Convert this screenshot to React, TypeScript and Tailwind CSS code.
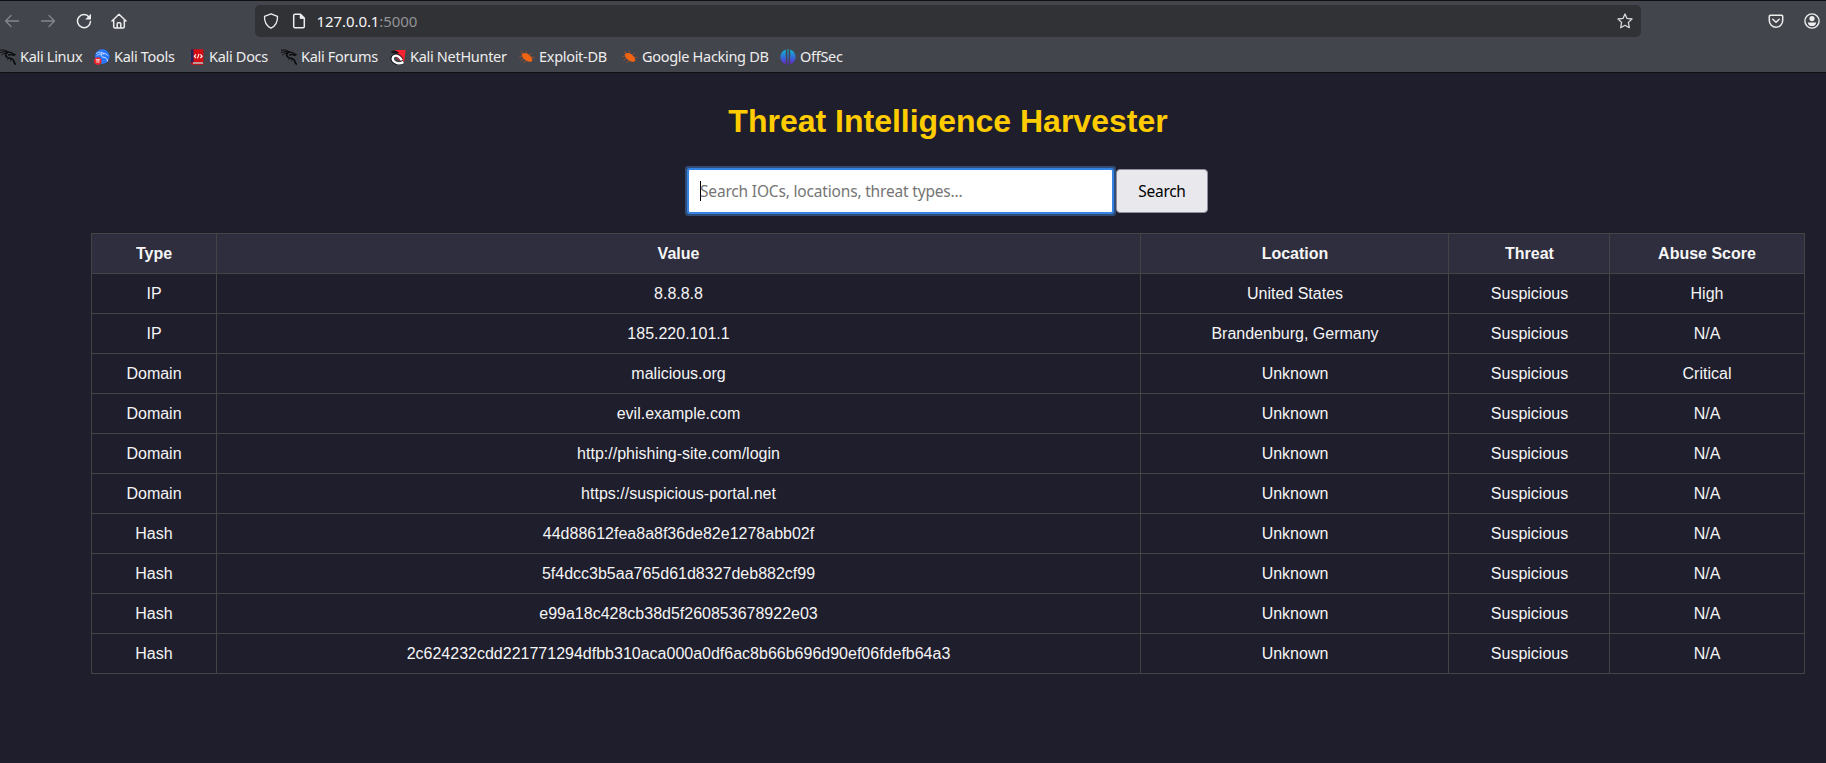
import type { ReactNode } from 'react';

const ui = 'font-["Noto_Sans",sans-serif]';

const rows = [
  ['IP', '8.8.8.8', 'United States', 'Suspicious', 'High'],
  ['IP', '185.220.101.1', 'Brandenburg, Germany', 'Suspicious', 'N/A'],
  ['Domain', 'malicious.org', 'Unknown', 'Suspicious', 'Critical'],
  ['Domain', 'evil.example.com', 'Unknown', 'Suspicious', 'N/A'],
  ['Domain', 'http://phishing-site.com/login', 'Unknown', 'Suspicious', 'N/A'],
  ['Domain', 'https://suspicious-portal.net', 'Unknown', 'Suspicious', 'N/A'],
  ['Hash', '44d88612fea8a8f36de82e1278abb02f', 'Unknown', 'Suspicious', 'N/A'],
  ['Hash', '5f4dcc3b5aa765d61d8327deb882cf99', 'Unknown', 'Suspicious', 'N/A'],
  ['Hash', 'e99a18c428cb38d5f260853678922e03', 'Unknown', 'Suspicious', 'N/A'],
  ['Hash', '2c624232cdd221771294dfbb310aca000a0df6ac8b66b696d90ef06fdefb64a3', 'Unknown', 'Suspicious', 'N/A'],
];

const cellPadding = ['p-0', 'p-0', 'py-0 pr-0 pl-px', 'py-0 pr-0 pl-px', 'p-0'];

const line = { fill: 'none', stroke: 'currentColor', strokeWidth: 1.3, strokeLinecap: 'round', strokeLinejoin: 'round' } as const;

function Icon({ children, className = '' }: { children: ReactNode; className?: string }) {
  return (
    <svg viewBox="0 0 16 16" className={`size-4 shrink-0 ${className}`}>
      {children}
    </svg>
  );
}

function Dragon() {
  return (
    <Icon>
      <g fill="none" stroke="#0b0c0e" strokeLinecap="round" strokeLinejoin="round">
        <path d="M0 1.2C3.2.5 6.3 1 8.6 3.1M.2 3.7C2.6 2.5 5 2.2 8 3.3M1.6 6C3.3 4.4 5 3.7 7.2 4" strokeWidth="1" />
        <path d="M6.8 3.4C5 5.6 5.4 8.4 8.6 9c3.3.5 4.9 1.4 5.3 3.6.2 1 .6 1.8 1.5 2.4" strokeWidth="1.7" />
        <path d="M8.2 3.2c2-.4 3.4.2 4.8 1.6l2.2.8-1.8.8-2.6-.9-2.3.5" strokeWidth="1.3" />
        <path d="M8.8 9.2 7.2 11M11.3 9.8l-.9 2.2" strokeWidth=".8" />
      </g>
    </Icon>
  );
}

function Tools() {
  return (
    <Icon>
      <circle cx="8.3" cy="7.6" r="7.3" fill="#2777ff" />
      <g fill="none" stroke="#d5e5ff" strokeLinecap="round">
        <path d="M2.3 4.3C5.2 2.6 8.3 2.9 10 4.5M3 6.5c2-1.5 4-2 6.3-1.5" strokeWidth=".8" />
        <path d="M7.2 4.8c-.7 2.5 1 3.4 3 3.6 2 .3 3 1.4 3.3 3.6M9.6 4.4c1.6-.2 3 .7 4 2" strokeWidth="1" />
      </g>
      <circle cx="3.8" cy="12.1" r="3.8" fill="#e8262d" />
      <path d="M1.7 10.7h4.2M3 10.7v3.2M4.8 10.7v3.2" fill="none" stroke="#fff" strokeWidth=".8" />
    </Icon>
  );
}

function Docs() {
  return (
    <svg viewBox="0 0 13 16" className="h-4 w-[13px] shrink-0">
      <path d="M0 1.2Q0 .3 1 .3h11.4v13H2v1.2h10.4v1.2H1.2Q0 15.5 0 14.3z" fill="#d50d12" />
      <path d="M0 1.2Q0 .3 1 .3h1.5v13H1.2L0 14z" fill="#26235e" />
      <path d="M2 13.4h10v1.2H2z" fill="#e9dcdc" />
      <path d="M5 5.3 3.3 7.2 5 9M9.4 5.3l1.7 1.9L9.4 9M6.5 9.3l1.5-4.5" fill="none" stroke="#fff" strokeWidth="1.1" />
    </svg>
  );
}

function NetHunter() {
  return (
    <Icon>
      <path d="M4.5 1H15.6L14.3 12.5 8 8.3z" fill="#f5222f" />
      <path d="M.4 3.2C3 .5 7 1.2 9 4L5.5 5z" fill="#151618" />
      <path d="M13.8 13.5C10 15.8 5 15.4 2.5 12 .5 9 2.6 5.500 6.300 5.700c3 .2 4.500 2.200 6 4.800" fill="none" stroke="#151618" strokeWidth="2.4" />
      <path d="M13.5 13.2C9.8 15 5.4 14.6 3.3 11.6 1.8 9 3.3 6.4 6.3 6.6c2.8.2 4 2.200 5.600 4.600" fill="none" stroke="#fff" strokeWidth="2.4" />
      <path d="M6.5 9.3c1.5 0 2.200 1 3.300 2.200" fill="none" stroke="#f5222f" strokeWidth="1" />
    </Icon>
  );
}

function Bug() {
  return (
    <Icon>
      <path d="M2.600 5C5 3.400 7.400 3.600 9.400 5.200l3.300 3.400.7 2.800-2 1.700-3-.8C5.200 10.800 3 8.700 2.600 5z" fill="#f06414" />
      <path d="M4 3.800 1.600 2.200M3 7 .3 7.700M4.600 9.400 1.500 11.700M7.300 12l-2.800 1.700M7.500 3.500 7 2M10.500 5.500l2.200-1.200M12.300 8l3.300.7" fill="none" stroke="#b65522" strokeWidth=".7" />
    </Icon>
  );
}

function OffSec() {
  return (
    <Icon>
      <defs>
        <linearGradient id="osg" x1="0" y1="0" x2="0" y2="1">
          <stop offset="0" stopColor="#12b5cf" />
          <stop offset=".5" stopColor="#3070d8" />
          <stop offset="1" stopColor="#6a20cf" />
        </linearGradient>
      </defs>
      <path d="M5.800 .6v14.400C-1.300 13.300-1.500 3 5.800 .6zM10.200 .6v14.400C17.300 13.300 17.500 3 10.200 .6zM7.400.3h1.200v15.400H7.400z" fill="url(#osg)" />
    </Icon>
  );
}

const bookmarks = [
  { label: 'Kali Linux', icon: <Dragon />, w: 'w-[94px]' },
  { label: 'Kali Tools', icon: <Tools />, w: 'w-[97px]' },
  { label: 'Kali Docs', icon: <Docs />, w: 'w-[90px] [&>svg]:mr-px' },
  { label: 'Kali Forums', icon: <Dragon />, w: 'w-[109px]' },
  { label: 'Kali NetHunter', icon: <NetHunter />, w: 'w-[129px]' },
  { label: 'Exploit-DB', icon: <Bug />, w: 'w-[103px]' },
  { label: 'Google Hacking DB', icon: <Bug />, w: 'w-[158px]' },
  { label: 'OffSec', icon: <OffSec />, w: 'w-[80px]' },
];

function Browser() {
  return (
    <header className={`${ui} h-[73px] border-y border-[#101014] bg-[#43454c] text-[#ededee]`}>
      <div className="flex h-10 items-center">
        <div className="flex w-[255px] items-center gap-5 pl-1">
          <Icon className="text-[#85868b]"><path {...line} d="M14.5 8H1.8M7 2.5 1.5 8 7 13.5" /></Icon>
          <Icon className="text-[#85868b]"><path {...line} d="M1.5 8h12.7M9 2.5 14.5 8 9 13.5" /></Icon>
          <Icon>
            <path {...line} strokeWidth={1.5} d="M13.2 4.2A6.5 6.5 0 1 0 14.5 8.5" />
            <path d="M15 .8v5.800H9.200z" fill="currentColor" />
          </Icon>
          <Icon className="-ml-px">
            <path {...line} strokeWidth={1.5} d="M1 8 8 1.300 15 8M2.700 7v6.700q0 1.300 1.300 1.300h8q1.300 0 1.300-1.300V7M6.200 14.800v-4q0-1 1-1h1.600q1 0 1 1v4" />
          </Icon>
        </div>
        <div className="flex h-8 w-[1386px] items-center rounded-[5px] bg-[#313236] pr-2 pl-2">
          <Icon><path {...line} d="M8 .9 1.500 3.300C1.200 9 3.600 13 8 15.200 12.400 13 14.800 9 14.500 3.300z" /></Icon>
          <Icon className="ml-3"><path {...line} strokeWidth={1.5} d="M9.500 1.200H4q-1.300 0-1.300 1.300v11q0 1.300 1.300 1.300h8q1.300 0 1.300-1.300V5zM9.500 1.200V5h3.800" /><path d="M9 1v4.500h4.500z" fill="currentColor" /></Icon>
          <span className="ml-[9.5px] text-[15px] tracking-[-0.08px] text-[#f5f5f6]">127.0.0.1<span className="text-[#929296]">:5000</span></span>
          <Icon className="ml-auto text-[#d8d8da]"><path {...line} d="m8 .9 2 4.500 5 .6-3.600 3.400.9 5.300L8 12.300l-4.300 2.400.9-5.300L1 6l5-.6z" /></Icon>
        </div>
        <Icon className="ml-[127px]"><path {...line} strokeWidth={1.5} d="M2.300 2.200h11.400q1 0 1 1v4.300a6.700 6.700 0 0 1-13.400 0V3.200q0-1 1-1zM4.800 6.200 8 9.200l3.200-3" /></Icon>
        <Icon className="ml-5">
          <circle {...line} strokeWidth={1.4} cx="8" cy="8" r="7.1" />
          <circle cx="8" cy="5.6" r="2.6" fill="currentColor" />
          <path d="M3.700 9.400h8.600c-.3 2.300-2 3.700-4.300 3.700s-4-1.400-4.300-3.700z" fill="currentColor" />
        </Icon>
      </div>
      <nav className="flex h-8 items-center">
        {bookmarks.map((b) => (
          <div key={b.label} className={`${b.w} flex shrink-0 items-center gap-1`}>
            {b.icon}
            <span className="pb-0.5 text-[14.5px] leading-5 tracking-[-0.3px] whitespace-nowrap">{b.label}</span>
          </div>
        ))}
      </nav>
    </header>
  );
}

export default function App() {
  return (
    <div className="flex h-[763px] w-[1826px] flex-col overflow-hidden bg-[#1f1e2d] text-[#f5f5f5]">
      <Browser />
      <main className='flex flex-col items-center pt-[30px] pr-[21px] pl-[91px] font-["Liberation_Sans",Arial,sans-serif]'>
        <h1 className="text-[32px] leading-[37px] font-bold text-[#ffcc00]">Threat Intelligence Harvester</h1>
        <form className={`${ui} mt-[29px] ml-px flex items-center gap-1`}>
          <div className="flex h-[42px] w-[423px] items-center rounded-[1px] bg-white pl-[11px] shadow-[0_0_0_2px_#3584e4,0_0_0_4px_#304d78]">
            <span className="h-5 w-px bg-black" />
            <span className="-ml-px pt-0.5 text-[15.5px] tracking-[-0.18px] text-[#757575]">Search IOCs, locations, threat types...</span>
          </div>
          <button type="button" className="h-11 w-[92px] rounded-[4px] border border-[#8f8f9d] bg-[#e9e9ed] pt-0.5 text-[15.5px] tracking-[-0.3px] text-black">Search</button>
        </form>
        <table className="mt-5 w-[1714px] table-fixed border-separate border-spacing-0 border-t border-l border-[#444] text-center text-[16px] leading-[18px]">
          <colgroup>
            <col className="w-[125px]" />
            <col className="w-[924px]" />
            <col className="w-[308px]" />
            <col className="w-[161px]" />
            <col className="w-[195px]" />
          </colgroup>
          <thead>
            <tr className="h-10 bg-[#2f2e3e]">
              {['Type', 'Value', 'Location', 'Threat', 'Abuse Score'].map((h, i) => (
                <th key={h} className={`border-r border-b border-[#444] font-bold ${cellPadding[i]}`}>{h}</th>
              ))}
            </tr>
          </thead>
          <tbody>
            {rows.map((r) => (
              <tr key={r[1]} className="h-10">
                {r.map((c, i) => (
                  <td key={i} className={`border-r border-b border-[#444] ${cellPadding[i]}`}>{c}</td>
                ))}
              </tr>
            ))}
          </tbody>
        </table>
      </main>
    </div>
  );
}
